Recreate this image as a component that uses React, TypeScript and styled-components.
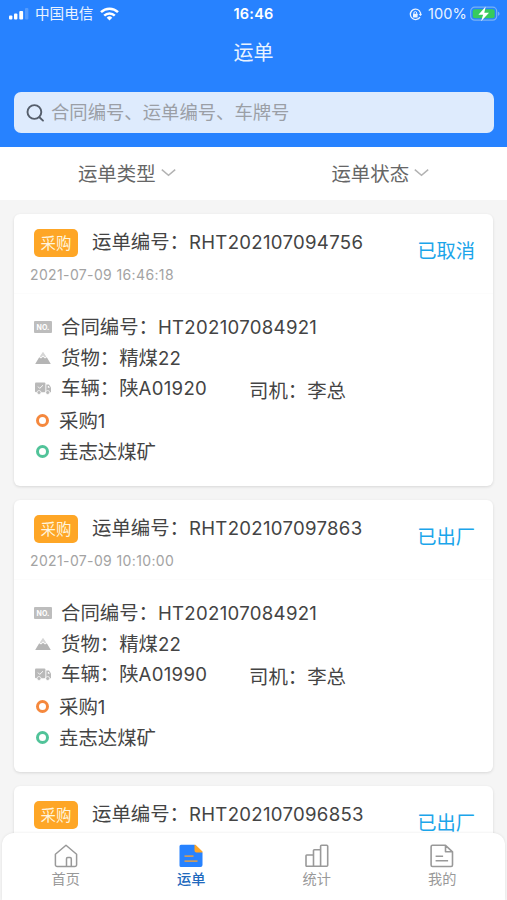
import React from 'react';
import styled, { createGlobalStyle } from 'styled-components';

const GlobalStyle = createGlobalStyle`
  * { box-sizing: border-box; }
  html, body { margin: 0; height: 100%; overflow: hidden; }
  body { font-family: Inter, "Noto Sans CJK SC", sans-serif; background: #f5f5f5; color: #444; }
  svg { display: block; flex: none; }
`;

const Screen = styled.div`
  position: relative;
  width: 507px;
  height: 900px;
  overflow: hidden;
  background: #f5f5f5;
`;

const Header = styled.header`
  height: 147px;
  background: #2782ff;
  color: #eaf3ff;
`;

const StatusBar = styled.div`
  display: grid;
  grid-template-columns: 1fr auto 1fr;
  align-items: center;
  height: 28px;
  padding: 0 7px 0 9px;
  font-size: 14.6px;
  line-height: 28px;
`;

const StatusGroup = styled.div<{ $end?: boolean }>`
  display: flex;
  align-items: center;
  justify-content: ${p => (p.$end ? 'flex-end' : 'flex-start')};
`;

const Carrier = styled.span`
  margin: 0 7px 0 6px;
`;

const Clock = styled.span`
  margin-right: 2px;
  font-size: 14.5px;
  font-weight: 600;
  letter-spacing: 0.25px;
  color: #fff;
`;

const Percent = styled.span`
  margin: 0 3px 0 6px;
  font-size: 14.6px;
  letter-spacing: 0.1px;
`;

const Title = styled.h1`
  margin: 0;
  height: 46px;
  padding-top: 1px;
  font-size: 20px;
  font-weight: 400;
  line-height: 48px;
  text-align: center;
`;

const SearchBox = styled.div`
  display: flex;
  align-items: center;
  gap: 6px;
  height: 41px;
  margin: 18px 13px 0 14px;
  padding: 0 0 1px 12px;
  border-radius: 7px;
  background: #deebfd;
  color: #9b9fa6;
  font-size: 18.35px;
  line-height: 38px;
`;

const Filters = styled.div`
  display: grid;
  grid-template-columns: 1fr 1fr;
  height: 53px;
  background: #fff;
`;

const Filter = styled.div`
  display: flex;
  align-items: center;
  justify-content: center;
  gap: 5px;
  padding-bottom: 2px;
  color: #666;
  font-size: 19.4px;
`;

const List = styled.main`
  display: flex;
  flex-direction: column;
  gap: 14px;
  padding: 14px 14px 0;
`;

const Card = styled.article`
  height: 272px;
  border-radius: 6px;
  background: #fff;
  box-shadow: 0 1px 3px rgba(0, 0, 0, 0.12);
`;

const CardHead = styled.div`
  display: flex;
  justify-content: space-between;
  height: 80px;
  padding: 14px 18px 0 16px;
  border-bottom: 1px solid #fcfcfc;
`;

const NumberRow = styled.div`
  display: flex;
  height: 30px;
  padding-left: 4px;
`;

const Tag = styled.span`
  width: 44px;
  height: 28px;
  margin: 1px 14px 0 0;
  border-radius: 5px;
  background: #fea626;
  color: #fff5de;
  font-size: 15.4px;
  line-height: 30px;
  text-align: center;
`;

const Text = styled.span`
  color: #444;
  font-size: 19.4px;
  line-height: 28px;
  white-space: nowrap;
`;

const Latin = styled.span`
  font-size: 18.6px;
  letter-spacing: 0.3px;
`;

const Time = styled.div`
  color: #a3a3a3;
  font-size: 14px;
  letter-spacing: 0.37px;
  line-height: 33px;
`;

const Status = styled.div`
  padding-top: 9px;
  color: #1ba5ea;
  font-size: 19.3px;
  line-height: 28px;
`;

const Details = styled.div`
  display: grid;
  grid-template-rows: 30.5px 30.5px 32px 31.5px 31px;
  padding: 18px 0 0 20px;
`;

const Detail = styled.div`
  display: flex;
  align-items: center;
`;

const IconSlot = styled.span<{ $width?: number }>`
  display: flex;
  width: ${p => p.$width ?? 27}px;
  flex: none;
`;

const NoBadge = styled.span`
  width: 18px;
  height: 12px;
  border-radius: 1px;
  background: #bdbdbd;
  color: #fff;
  font-size: 7px;
  font-weight: 700;
  line-height: 13px;
  text-align: center;
`;

const Vehicle = styled.div`
  width: 188px;
  padding-bottom: 1px;
  line-height: 28px;
`;

const Driver = styled.div`
  padding-top: 4px;
  line-height: 28px;
`;

const Ring = styled.span<{ $color: string }>`
  width: 13px;
  height: 13px;
  margin: 0 0 1px 2px;
  border: 3px solid ${p => p.$color};
  border-radius: 50%;
`;

const TabBar = styled.nav`
  position: absolute;
  left: 2px;
  right: 2px;
  bottom: 0;
  display: grid;
  grid-template-columns: repeat(4, 1fr);
  height: 67px;
  padding: 11px 0 0 1px;
  border-radius: 12px 12px 0 0;
  background: #fff;
  box-shadow: 0 0 3px rgba(0, 0, 0, 0.09);
`;

const Tab = styled.div<{ $active?: boolean }>`
  display: flex;
  flex-direction: column;
  align-items: center;
  color: ${p => (p.$active ? '#2169bd' : '#999')};
  font-size: 14.2px;
  line-height: 21px;
  font-weight: ${p => (p.$active ? 500 : 400)};
`;

const SignalIcon = () => (
  <svg width="20" height="12" viewBox="0 0 20 12" fill="#fff">
    <rect x="0" y="7.5" width="3.4" height="4" rx="1" />
    <rect x="5" y="5.5" width="3.4" height="6" rx="1" />
    <rect x="10.3" y="3" width="3.8" height="8.5" rx="1" />
    <rect x="16" y="0" width="3.4" height="11.5" rx="1" opacity=".2" />
  </svg>
);

const WifiIcon = () => (
  <svg width="19" height="14" viewBox="0 0 19 14" fill="none" stroke="#fff" strokeWidth="2.5">
    <path d="M1 5.1a12.2 12.2 0 0 1 17 0M4.2 8.6a7.6 7.6 0 0 1 10.6 0" />
    <path d="M6.7 10.7a4 4 0 0 1 5.6 0L9.5 13.6Z" fill="#fff" stroke="none" />
  </svg>
);

const LockIcon = () => (
  <svg width="13" height="13" viewBox="0 0 13 13" fill="none" stroke="#eaf3ff" strokeWidth="1.3">
    <path d="M10.2 2.6A5.2 5.2 0 1 0 11 9.1M11.5 7.4A5.2 5.2 0 0 0 10.2 2.6" />
    <path d="m9.8 6 1.7 2L13 6Z" fill="#eaf3ff" stroke="none" />
    <rect x="4" y="5.8" width="4.6" height="3.6" rx=".5" fill="#eaf3ff" stroke="none" />
    <path d="M4.9 6V5a1.4 1.4 0 0 1 2.8 0v1" strokeWidth="1" />
  </svg>
);

const BatteryIcon = () => (
  <svg width="30" height="16" viewBox="0 0 30 16">
    <rect x=".7" y="1.2" width="26" height="13" rx="4" fill="none" stroke="#79b1f5" strokeWidth="1.2" />
    <rect x="2.7" y="3.2" width="22" height="9" rx="2" fill="#37cb5c" />
    <path d="M28 5.8c2 .6 2 3.4 0 4Z" fill="#79b1f5" />
    <path d="M15.7.6 8.4 8.8h4.7l-2 6.5 7.9-8.6h-4.7Z" fill="#fff" />
  </svg>
);

const SearchIcon = () => (
  <svg width="19" height="19" viewBox="0 0 19 19" fill="none" stroke="#555e6b" strokeWidth="1.9" strokeLinecap="round">
    <circle cx="8.4" cy="9" r="6.9" />
    <path d="m13.4 14.2 3.6 3.4" />
  </svg>
);

const ChevronIcon = () => (
  <svg width="15" height="9" viewBox="0 0 15 9" fill="none" stroke="#b3b3b3" strokeWidth="1.5">
    <path d="m.8 1.6 6.7 5.7 6.7-5.7" />
  </svg>
);

const CargoIcon = () => (
  <svg width="18" height="14" viewBox="0 0 18 14">
    <path d="M1.2 13 5.2 6.2 7 7.6 9 5.8l2 1.8 1.8-1.4 4 6.8Z" fill="#b5b5b5" />
    <path d="M5.8 5.4 9 .8l3.2 4.6-1.2 1L9 4.6 7 6.4Z" fill="#d6d6d6" />
  </svg>
);

const TruckIcon = () => (
  <svg width="18" height="14" viewBox="0 0 18 14" fill="#b9b9b9">
    <rect x="1" y=".5" width="10.4" height="9.7" rx="1" />
    <path d="M12.3 2.5H15l2 3v4.7h-4.7Z" />
    <path d="m4 4.6 1.7 1.8L9 3.2" fill="none" stroke="#fff" strokeWidth=".9" />
    <path d="M13.8 4h1l1 1.7h-2Z" fill="#fff" />
    <circle cx="5" cy="10.5" r="2" stroke="#fff" strokeWidth=".7" />
    <circle cx="13.7" cy="10.5" r="2" stroke="#fff" strokeWidth=".7" />
  </svg>
);

const HomeIcon = () => (
  <svg width="24" height="24" viewBox="0 0 24 24" fill="none" stroke="#999" strokeWidth="1.5" strokeLinejoin="round">
    <path d="M1.4 10.3 12 1.3l10.6 9v10.4a1.8 1.8 0 0 1-1.8 1.8H3.2a1.8 1.8 0 0 1-1.8-1.8Z" />
    <path d="M12.5 22.5v-7.7a1.2 1.2 0 0 1 1.2-1.2h2.4a1.2 1.2 0 0 1 1.2 1.2v7.7" />
  </svg>
);

const WaybillIcon = () => (
  <svg width="24" height="24" viewBox="0 0 24 24">
    <path d="M2 .8h13.5l8 7.7V21a2 2 0 0 1-2 2H2a1.5 1.5 0 0 1-1.5-1.5V2.3A1.5 1.5 0 0 1 2 .8Z" fill="#2782ff" />
    <path d="M15.5.8h1l7 6.7v1h-6a2 2 0 0 1-2-2Z" fill="#fea626" />
    <path d="M5.5 12.2h9M5.5 17.2h13" stroke="#c99b62" strokeWidth="1.8" />
  </svg>
);

const StatsIcon = () => (
  <svg width="24" height="24" viewBox="0 0 24 24" fill="none" stroke="#999" strokeWidth="1.6" strokeLinejoin="round">
    <path d="M8.5 22.3H1.8a.8.8 0 0 1-.8-.8V11.8a.8.8 0 0 1 .8-.8h6.7M8.5 22.3V6.6a.8.8 0 0 1 .8-.8h6.3M8.5 22.3h7.1V2.2a1 1 0 0 1 1-1h5.1a1 1 0 0 1 1 1v19.1a1 1 0 0 1-1 1h-6.1" />
  </svg>
);

const MineIcon = () => (
  <svg width="24" height="24" viewBox="0 0 24 24" fill="none" stroke="#999" strokeWidth="1.6" strokeLinejoin="round">
    <path d="M2.5 1.3h13l7 6.5v13.3a1.4 1.4 0 0 1-1.4 1.4H2.5a1.4 1.4 0 0 1-1.4-1.4V2.7a1.4 1.4 0 0 1 1.4-1.4ZM15.5 1.3v6.5h7M5.6 12.2h7.5M5.6 16.8h12.5" />
  </svg>
);

interface Waybill {
  no: string;
  status: string;
  time?: string;
  plate?: string;
}

const waybills: Waybill[] = [
  { no: 'RHT202107094756', time: '2021-07-09 16:46:18', status: '已取消', plate: 'A01920' },
  { no: 'RHT202107097863', time: '2021-07-09 10:10:00', status: '已出厂', plate: 'A01990' },
  { no: 'RHT202107096853', status: '已出厂' },
];

const WaybillCard = ({ no, time, status, plate }: Waybill) => (
  <Card>
    <CardHead>
      <div>
        <NumberRow>
          <Tag>采购</Tag>
          <Text>运单编号：<Latin>{no}</Latin></Text>
        </NumberRow>
        {time && <Time>{time}</Time>}
      </div>
      <Status>{status}</Status>
    </CardHead>
    {plate && (
      <Details>
        <Detail>
          <IconSlot><NoBadge>NO.</NoBadge></IconSlot>
          <Text>合同编号：<Latin>HT202107084921</Latin></Text>
        </Detail>
        <Detail>
          <IconSlot><CargoIcon /></IconSlot>
          <Text>货物：精煤<Latin>22</Latin></Text>
        </Detail>
        <Detail>
          <IconSlot><TruckIcon /></IconSlot>
          <Vehicle><Text>车辆：陕<Latin>{plate}</Latin></Text></Vehicle>
          <Driver><Text>司机：李总</Text></Driver>
        </Detail>
        <Detail>
          <IconSlot $width={25}><Ring $color="#f5883d" /></IconSlot>
          <Text>采购<Latin>1</Latin></Text>
        </Detail>
        <Detail>
          <IconSlot $width={25}><Ring $color="#51c399" /></IconSlot>
          <Text>垚志达煤矿</Text>
        </Detail>
      </Details>
    )}
  </Card>
);

export default function App() {
  return (
    <Screen>
      <GlobalStyle />
      <Header>
        <StatusBar>
          <StatusGroup><SignalIcon /><Carrier>中国电信</Carrier><WifiIcon /></StatusGroup>
          <Clock>16:46</Clock>
          <StatusGroup $end><LockIcon /><Percent>100%</Percent><BatteryIcon /></StatusGroup>
        </StatusBar>
        <Title>运单</Title>
        <SearchBox><SearchIcon />合同编号、运单编号、车牌号</SearchBox>
      </Header>
      <Filters>
        <Filter>运单类型<ChevronIcon /></Filter>
        <Filter>运单状态<ChevronIcon /></Filter>
      </Filters>
      <List>{waybills.map(w => <WaybillCard key={w.no} {...w} />)}</List>
      <TabBar>
        <Tab><HomeIcon />首页</Tab>
        <Tab $active><WaybillIcon />运单</Tab>
        <Tab><StatsIcon />统计</Tab>
        <Tab><MineIcon />我的</Tab>
      </TabBar>
    </Screen>
  );
}
